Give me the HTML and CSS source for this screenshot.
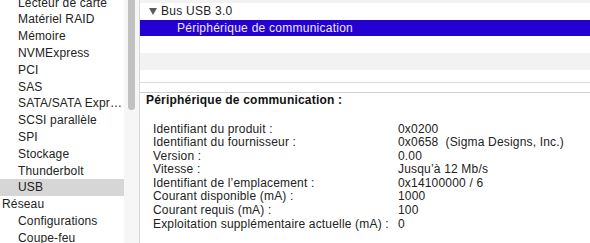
FILE: index.html
```html
<!DOCTYPE html>
<html lang="fr">
<head>
    <meta charset="UTF-8">
    <title>Informations système</title>
    <link rel="stylesheet" href="styles.css">
</head>
<body>
    <div class="window">
        <div class="sidebar">
            <ul class="tree">
                <li class="sub">Lecteur de carte</li>
                <li class="sub">Matériel RAID</li>
                <li class="sub">Mémoire</li>
                <li class="sub">NVMExpress</li>
                <li class="sub">PCI</li>
                <li class="sub">SAS</li>
                <li class="sub">SATA/SATA Express</li>
                <li class="sub">SCSI parallèle</li>
                <li class="sub">SPI</li>
                <li class="sub">Stockage</li>
                <li class="sub">Thunderbolt</li>
                <li class="sub selected">USB</li>
                <li>Réseau</li>
                <li class="sub">Configurations</li>
                <li class="sub">Coupe-feu</li>
            </ul>
        </div>
        <div class="scrollbar"><div class="thumb"></div></div>

        <div class="main">
            <div class="device-list">
                <div class="row alt"></div>
                <div class="row"><svg class="disclosure" width="8" height="7" viewBox="0 0 8 7"><path d="M0 0H8L4 7Z" fill="#5c5c5c"/></svg>Bus USB 3.0</div>
                <div class="row active">Périphérique de communication</div>
                <div class="row"></div>
                <div class="row alt"></div>
                <div class="row"></div>
            </div>
            <div class="splitter"></div>
            <div class="details">
                <h4>Périphérique de communication :</h4>
                <dl class="props">
                    <dt>Identifiant du produit :</dt><dd>0x0200</dd>
                    <dt>Identifiant du fournisseur :</dt><dd>0x0658 &nbsp;(Sigma Designs, Inc.)</dd>
                    <dt>Version :</dt><dd>0.00</dd>
                    <dt>Vitesse :</dt><dd>Jusqu’à 12 Mb/s</dd>
                    <dt>Identifiant de l’emplacement :</dt><dd>0x14100000 / 6</dd>
                    <dt>Courant disponible (mA) :</dt><dd>1000</dd>
                    <dt>Courant requis (mA) :</dt><dd>100</dd>
                    <dt>Exploitation supplémentaire actuelle (mA) :</dt><dd>0</dd>
                </dl>
            </div>
        </div>
    </div>
</body>
</html>
```

FILE: styles.css
```css
html, body {
    margin: 0;
    padding: 0;
}
body {
    font-family: "Liberation Sans", Arial, sans-serif;
    color: #222;
    background-color: #fff;
    width: 590px;
    height: 243px;
    overflow: hidden;
    letter-spacing: 0.25px;
}
.window {
    display: flex;
    height: 243px;
}

/* barre latérale */
.sidebar {
    width: 124px;
    flex: none;
    overflow: hidden;
    background-color: #fff;
}
.tree {
    list-style: none;
    margin: -5.4px 0 0 0;
    padding: 0;
    font-size: 12px;
    line-height: 16.8px;
    letter-spacing: 0.15px;
}
.tree li {
    padding-left: 2px;
    white-space: nowrap;
    overflow: hidden;
    text-overflow: ellipsis;
}
.tree li.sub {
    padding-left: 18px;
    padding-right: 1px;
}
.tree li.selected {
    background-color: #d6d6d6;
}

.scrollbar {
    width: 16px;
    flex: none;
    background-color: #f6f6f6;
    border-right: 1px solid #d6d6d6;
    padding: 0 4px;
    box-sizing: border-box;
}
.thumb {
    width: 7px;
    height: 114px;
    margin-top: -4px;
    background-color: #c1c1c1;
    border-radius: 4px;
}

/* panneau principal */
.main {
    flex: 1;
    display: flex;
    flex-direction: column;
}
.device-list {
    height: 82px;
    overflow: hidden;
    font-size: 12px;
    line-height: 16.8px;
}
.device-list .row {
    height: 16.8px;
    white-space: nowrap;
    padding-left: 21px;
}
.device-list .row:first-child {
    margin-top: -14.1px;
}
.device-list .row.alt {
    background-color: #f3f2f3;
}
.device-list .row.active {
    background-color: #2500d2;
    color: #eeeaff;
    padding-left: 37px;
}
.disclosure {
    margin-left: -12px;
    margin-right: 4px;
    vertical-align: baseline;
}
.splitter {
    height: 9px;
    border-top: 1px solid #dcdcdc;
    border-bottom: 1px solid #cfcfcf;
}

.details {
    padding: 0 0 0 6px;
}
.details h4 {
    margin: 0;
    font-size: 12px;
    line-height: 14px;
    font-weight: bold;
    color: #111;
    letter-spacing: 0.2px;
}
.props {
    margin: 15.5px 0 0 7px;
    display: grid;
    grid-template-columns: 245px 1fr;
    font-size: 12px;
    line-height: 13.6px;
    letter-spacing: 0.18px;
}
.props dt, .props dd {
    margin: 0;
    white-space: nowrap;
}
```
